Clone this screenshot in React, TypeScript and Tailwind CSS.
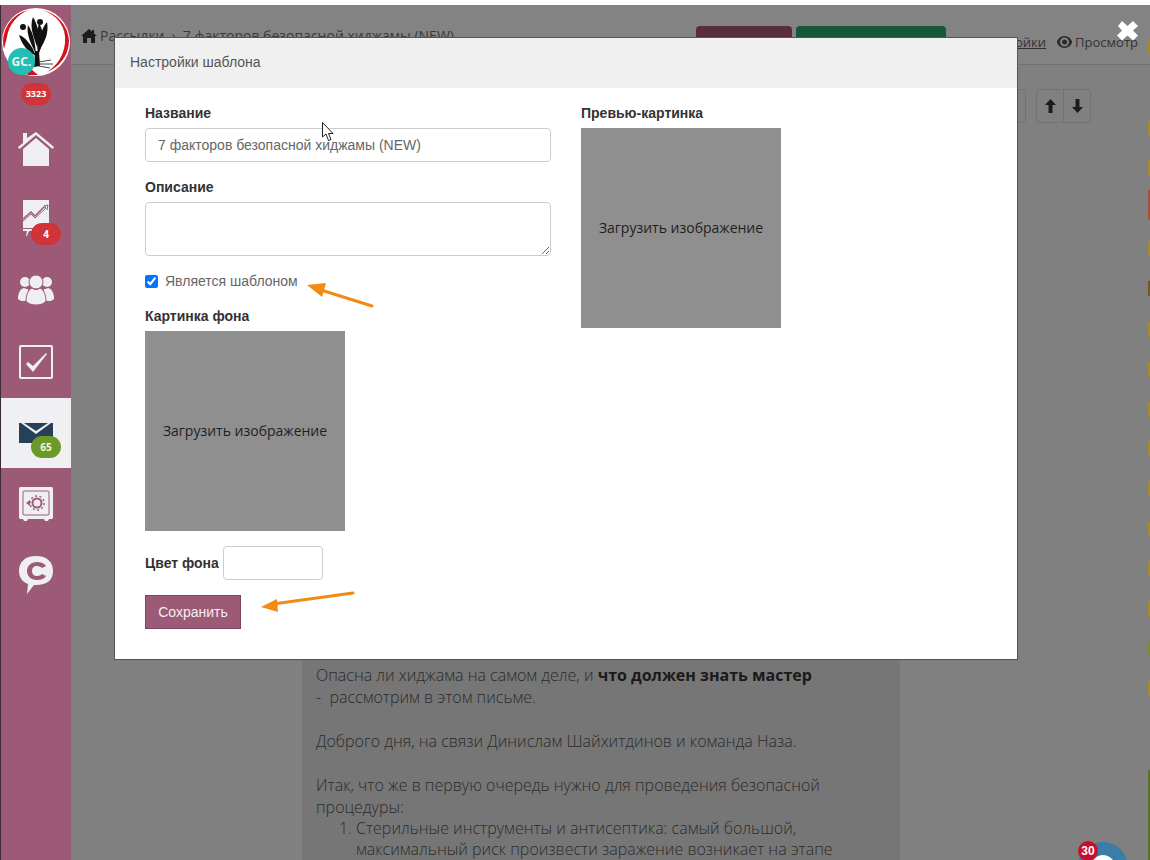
import React from "react";

const edgeTicks = [
  { top: 40, height: 14, color: "#a58a2c" },
  { top: 121, height: 15, color: "#a58a2c" },
  { top: 160, height: 16, color: "#a58a2c" },
  { top: 190, height: 30, color: "#a8503a" },
  { top: 241, height: 15, color: "#a58a2c" },
  { top: 281, height: 15, color: "#6b5a2a" },
  { top: 322, height: 15, color: "#a58a2c" },
  { top: 362, height: 15, color: "#a58a2c" },
  { top: 402, height: 15, color: "#a58a2c" },
  { top: 441, height: 15, color: "#a58a2c" },
  { top: 481, height: 15, color: "#a58a2c" },
  { top: 522, height: 14, color: "#a58a2c" },
  { top: 561, height: 15, color: "#a58a2c" },
  { top: 601, height: 16, color: "#a58a2c" },
  { top: 642, height: 14, color: "#7f8a2c" },
  { top: 681, height: 15, color: "#a58a2c" },
  { top: 770, height: 90, color: "#5d7320" },
];

const Logo = () => (
  <div className="relative h-[70px] w-[70px]">
    <svg width="70" height="70" viewBox="0 0 70 70">
      <circle cx="35" cy="35" r="34" fill="#ffffff" />
      <path d="M3 42 A32 32 0 0 1 28 3 A34 34 0 0 0 6 30 Z" fill="#d3141c" />
      <path d="M40 3 A33 33 0 0 1 68 34 A34 34 0 0 1 46 65 A40 40 0 0 0 64 36 A30 30 0 0 0 40 3 Z" fill="#d3141c" />
      <path d="M24 65 L30 62 L37 68 L27 68 Z" fill="#d3141c" />
      <path d="M32 10 C28 20 33 30 36 40 C39 30 38 20 32 10 Z" fill="#111111" />
      <path d="M27 18 C25 27 30 37 35 47 C34 37 33 27 27 18 Z" fill="#111111" />
      <path d="M38 16 C44 26 42 38 37 48 C36 38 35 26 38 16 Z" fill="#111111" />
      <path d="M18 28 C24 30 31 38 35 49 C27 45 21 38 18 28 Z" fill="#111111" />
      <path d="M46 15 C48 26 44 34 39 42 C38 32 40 22 46 15 Z" fill="#111111" />
      <circle cx="22" cy="20" r="3" fill="#111111" />
      <circle cx="39" cy="15" r="3" fill="#111111" />
      <path d="M34 44 L38 44 L39 59 L33 60 Z" fill="#111111" />
      <path d="M38 55 L50 53 M38 57 L52 57 M38 59 L49 61" stroke="#444444" strokeWidth="1" />
    </svg>
    <span className="absolute left-[7px] top-[41px] flex h-[27px] w-[27px] items-center justify-center rounded-full bg-[#23bdb3] text-[12px] font-bold text-[#e8f6f5]">
      GC.
    </span>
  </div>
);

const HomeIcon = () => (
  <svg width="36" height="34" viewBox="0 0 36 34" fill="#efeff1">
    <path d="M5 1h4v5L18 0l18 15-1.500 2L18 3 1.500 17 0 15l5-4z" />
    <path d="M5 17 18 6l13 11v17H5z" />
  </svg>
);

const ChartIcon = () => (
  <svg width="27" height="36" viewBox="0 0 27 36">
    <path d="M0 0h26v28H0z" fill="#efeff1" />
    <path d="M0 19 8 12 12 16 22 6" fill="none" stroke="#9c5a76" strokeWidth="1.500" />
    <path d="M0 21 8 14 12 18 23 8 21 6l4-1-1 5" fill="none" stroke="#9c5a76" strokeWidth="1" />
    <path d="M0 29h9v2H6l-2 5H3l1-5H0z" fill="#efeff1" />
  </svg>
);

const PeopleIcon = () => (
  <svg width="36" height="30" viewBox="0 0 36 30" fill="#efeff1">
    <circle cx="7" cy="7" r="5" />
    <circle cx="29" cy="7" r="5" />
    <path d="M0 24c0-6 2-10 6-11 2 1 3 1 4 1v12H3z" />
    <path d="M36 24c0-6-2-10-6-11-2 1-3 1-4 1v12h7z" />
    <circle cx="18" cy="7" r="7" stroke="#9c5a76" strokeWidth="1" />
    <path d="M8 26c0-7 3-12 6-13 3 2 5 2 8 0 3 1 6 6 6 13-2 3-6 4-10 4s-8-1-10-4z" stroke="#9c5a76" strokeWidth="1" />
  </svg>
);

const TaskIcon = () => (
  <svg width="34" height="34" viewBox="0 0 34 34" fill="none">
    <rect x="1" y="1" width="32" height="32" rx="1" stroke="#efeff1" strokeWidth="2" />
    <path d="M7 19l2-2 5 4L27 8l1 1-14 18z" fill="#efeff1" />
  </svg>
);

const MailIcon = () => (
  <svg width="34" height="20" viewBox="0 0 34 20">
    <path d="M0 0h2l15 11L32 0h2v20H0z" fill="#27405a" />
    <path d="M5 0h24L17 8z" fill="#27405a" />
  </svg>
);

const SafeIcon = () => (
  <svg width="34" height="34" viewBox="0 0 34 34">
    <path d="M1 0h32l1 1v30l-1 1h-3l-1 2h-3l-1-2H9l-1 2H5l-1-2H1l-1-1V1z" fill="#efeff1" />
    <rect x="4" y="4" width="26" height="24" rx="1" fill="none" stroke="#9c5a76" strokeWidth="1" />
    <circle cx="18" cy="16" r="4.500" fill="none" stroke="#9c5a76" strokeWidth="2" />
    <circle cx="18" cy="16" r="7" fill="none" stroke="#9c5a76" strokeWidth="1.500" strokeDasharray="2 2.400" />
    <path d="M7 16l4-3v6z" fill="#9c5a76" />
  </svg>
);

const ChatIcon = () => (
  <svg width="34" height="38" viewBox="0 0 34 38">
    <path d="M17 0c11 0 17 6 17 15s-6 14-17 14h-2l-7 9 1-10C3 26 0 21 0 15 0 6 6 0 17 0z" fill="#efeff1" />
    <path d="M27 10c-2-3-5-4-9-4-6 0-10 4-10 9s4 9 10 9c4 0 7-1 9-4l-4-2c-1 1-3 2-5 2-3 0-5-2-5-5s2-5 5-5c2 0 4 1 5 2z" fill="#9c5a76" />
  </svg>
);

const Sidebar = () => (
  <aside className="flex w-[71px] shrink-0 flex-col border-l border-l-[#3a2a33] bg-[#9c5a76]">
    <div className="pt-[2px]">
      <Logo />
    </div>
    <div className="mt-[6px] flex justify-center">
      <span className="flex h-[22px] w-[30px] items-center justify-center rounded-full bg-[#d13438] text-[9px] font-bold text-white">
        3323
      </span>
    </div>
    <div className="mt-[27px] flex h-[68px] items-start justify-center">
      <HomeIcon />
    </div>
    <div className="relative flex h-[75px] items-start justify-center pl-[1px]">
      <ChartIcon />
      <span className="absolute left-[30px] top-[23px] flex h-[22px] w-[30px] items-center justify-center rounded-full bg-[#d13438] text-[10px] font-bold text-white">
        4
      </span>
    </div>
    <div className="flex h-[70px] items-start justify-center">
      <PeopleIcon />
    </div>
    <div className="flex h-[53px] items-start justify-center">
      <TaskIcon />
    </div>
    <div className="relative flex h-[70px] items-start justify-center bg-[#f0f0f2] pt-[25px]">
      <MailIcon />
      <span className="absolute left-[30px] top-[38px] flex h-[22px] w-[30px] items-center justify-center rounded-full bg-[#6c9a28] text-[10px] font-bold text-[#f4f4e0]">
        65
      </span>
    </div>
    <div className="flex h-[69px] items-start justify-center pt-[19px]">
      <SafeIcon />
    </div>
    <div className="flex items-start justify-center pt-[19px]">
      <ChatIcon />
    </div>
  </aside>
);

const PageBehind = () => (
  <main className="flex min-w-0 flex-1 flex-col bg-[#808080] text-[#2b2b2b]">
    <header className="flex h-[60px] shrink-0 items-start border-b border-b-[#727272] bg-[#838383] pl-[10px] pr-[12px]">
      <div className="flex items-center gap-[4px] pt-[22px] font-['Open_Sans',sans-serif] text-[14px] leading-[18px]">
        <svg width="16" height="14" viewBox="0 0 16 14" fill="#1c1c1c">
          <path d="M8 0 0 7h2v7h4V9h4v5h4V7h2l-3-2.600V1h-2v1.700z" />
        </svg>
        <span className="ml-[-1px] whitespace-nowrap text-[#3a3a3a]">Рассылки</span>
        <span className="mx-[3px] text-[#3a3a3a]">›</span>
        <span className="whitespace-nowrap text-[#3a3a3a]">7 факторов безопасной хиджамы (NEW)</span>
      </div>
      <div className="ml-auto flex items-start pt-[21px]">
        <div className="h-[36px] w-[96px] rounded-[4px] bg-[#5a2d3e]" />
        <div className="ml-[4px] h-[36px] w-[150px] rounded-[4px] bg-[#14573a]" />
        <div className="ml-[17px] flex items-center gap-[11px] pt-[6px] font-['Open_Sans',sans-serif] text-[13px] leading-[20px] text-[#333333]">
          <a className="whitespace-nowrap underline">⚙ Настройки</a>
          <span className="flex items-center gap-[3px] whitespace-nowrap">
            <svg width="15" height="12" viewBox="0 0 15 12" fill="#2a2a2a">
              <path fillRule="evenodd" d="M7.500 0C12 0 15 4 15 6s-3 6-7.500 6S0 8 0 6s3-6 7.500-6zm0 1.500a4.500 4.500 0 1 0 0 9 4.500 4.500 0 0 0 0-9z" />
              <circle cx="7.500" cy="6" r="2.500" />
            </svg>
            Просмотр
          </span>
        </div>
      </div>
    </header>

    <div className="mt-[24px] flex h-[34px] shrink-0 items-center justify-end pr-[59px]">
      <div className="h-[34px] w-[40px] rounded-r-[4px] border border-[#727272]" />
      <div className="ml-[10px] flex h-[34px] w-[55px] rounded-[4px] border border-[#727272]">
        <span className="flex flex-1 items-center justify-center border-r border-r-[#727272]">
          <svg width="11" height="14" viewBox="0 0 11 14" fill="#1c1c1c">
            <path d="M5.500 0 11 6H7.500v8h-4V6H0z" />
          </svg>
        </span>
        <span className="flex flex-1 items-center justify-center">
          <svg width="11" height="14" viewBox="0 0 11 14" fill="#1c1c1c">
            <path d="M5.500 14 11 8H7.500V0h-4v8H0z" />
          </svg>
        </span>
      </div>
    </div>

    <div className="ml-[231px] w-[598px] flex-1 bg-[#767676] pl-[14px] pr-[30px] pt-[541px] font-['Open_Sans',sans-serif] text-[16px] font-light leading-[22px] text-[#2b2b2b]">
      <p>
        Опасна ли хиджама на самом деле, и <b className="font-bold text-[#1a1a1a]">что должен знать мастер</b>
      </p>
      <p>-&nbsp; рассмотрим в этом письме.</p>
      <p className="mt-[22px]">Доброго дня, на связи Динислам Шайхитдинов и команда Наза.</p>
      <p className="mt-[22px]">Итак, что же в первую очередь нужно для проведения безопасной процедуры:</p>
      <ol className="list-decimal pl-[40px] leading-[21px]">
        <li>Стерильные инструменты и антисептика: самый большой, максимальный риск произвести заражение возникает на этапе</li>
      </ol>
    </div>
  </main>
);

const Label = ({ children }: { children: React.ReactNode }) => (
  <label className="mb-[5px] block text-[14px] font-bold leading-[20px] text-[#333333]">{children}</label>
);

const UploadBox = () => (
  <div className="flex h-[200px] w-[200px] items-center justify-center bg-[#8f8f8f] pb-[2px] font-['Open_Sans',sans-serif] text-[14px] text-[#1f1f1f]">
    Загрузить изображение
  </div>
);

const SettingsModal = () => (
  <div className="absolute left-[114px] top-[37px] z-10 h-[623px] w-[904px] border border-[#555555] bg-white font-['Liberation_Sans',sans-serif]">
    <div className="flex h-[50px] items-center bg-[#f0f0f1] pb-[2px] pl-[15px] text-[14px] text-[#555555]">Настройки шаблона</div>
    <div className="flex gap-[30px] pl-[30px] pt-[15px]">
      <div className="flex w-[406px] flex-col gap-[15px]">
        <div>
          <Label>Название</Label>
          <input
            readOnly
            value="7 факторов безопасной хиджамы (NEW)"
            className="h-[34px] w-full rounded-[4px] border border-[#cccccc] px-[12px] text-[14px] text-[#666666]"
          />
        </div>
        <div>
          <Label>Описание</Label>
          <textarea readOnly className="block h-[54px] w-full rounded-[4px] border border-[#cccccc]" />
        </div>
        <label className="flex h-[20px] items-center text-[14px] text-[#666666]">
          <input type="checkbox" readOnly checked className="mr-[7px] h-[13px] w-[13px] accent-[#0075ff]" />
          Является шаблоном
        </label>
        <div>
          <Label>Картинка фона</Label>
          <UploadBox />
        </div>
        <div className="flex items-center">
          <span className="text-[14px] font-bold text-[#333333]">Цвет фона</span>
          <input readOnly className="ml-[4px] h-[34px] w-[100px] rounded-[4px] border border-[#cccccc]" />
        </div>
        <div>
          <button className="h-[34px] w-[96px] border border-[#7d4660] bg-[#9c5a76] text-[14px] text-[#f5eef1]">Сохранить</button>
        </div>
      </div>
      <div>
        <Label>Превью-картинка</Label>
        <UploadBox />
      </div>
    </div>
  </div>
);

const App = () => {
  return (
    <div className="relative flex h-[860px] w-[1150px] flex-col overflow-hidden bg-white">
      <div className="h-[5px] shrink-0 bg-white" />
      <div className="flex min-h-0 flex-1">
        <Sidebar />
        <PageBehind />
      </div>

      <SettingsModal />

      {/* close cross */}
      <svg className="absolute left-[1116px] top-[20px] z-20" width="23" height="21" viewBox="0 0 23 21">
        <path d="M2 6 6 1l5.500 5L17 1l5 5-5 4.500 5 5-5 5-5.500-5L6 20.500l-5-5 5-5z" fill="#ffffff" />
      </svg>

      {/* orange arrows drawn over the screenshot */}
      <svg className="absolute left-[300px] top-[278px] z-20" width="80" height="34" viewBox="0 0 80 34">
        <path d="M21 12 72 28" stroke="#f28a16" strokeWidth="3" strokeLinecap="round" />
        <path d="M7 7 26 5 22 19z" fill="#f28a16" />
      </svg>
      <svg className="absolute left-[255px] top-[586px] z-20" width="104" height="28" viewBox="0 0 104 28">
        <path d="M18 18 98 7" stroke="#f28a16" strokeWidth="3" strokeLinecap="round" />
        <path d="M6 21 22 13 23 26z" fill="#f28a16" />
      </svg>

      {/* mouse pointer */}
      <svg className="absolute left-[322px] top-[122px] z-20" width="13" height="20" viewBox="0 0 13 20">
        <path d="M.5.5V15l3.500-3 2.500 6.500 2.500-1L6.500 11.500H11z" fill="#ffffff" stroke="#222222" strokeWidth="1" />
      </svg>

      {/* chat widget, cut by the window edge */}
      <div className="absolute left-[1078px] top-[842px] z-10 flex h-[50px] w-[50px] items-center justify-center rounded-full bg-[#3b7ca8]">
        <div className="h-[24px] w-[24px] rounded-full bg-white" />
      </div>
      <span className="absolute left-[1078px] top-[841px] z-10 flex h-[20px] w-[20px] items-center justify-center rounded-full bg-[#c8102e] font-['Liberation_Sans',sans-serif] text-[12px] font-bold text-white">
        30
      </span>

      {/* coloured ticks of the page behind */}
      {edgeTicks.map((t) => (
        <div
          key={t.top}
          className="absolute left-[1148px] w-[2px]"
          style={{ top: t.top, height: t.height, backgroundColor: t.color }}
        />
      ))}
    </div>
  );
};

export default App;
